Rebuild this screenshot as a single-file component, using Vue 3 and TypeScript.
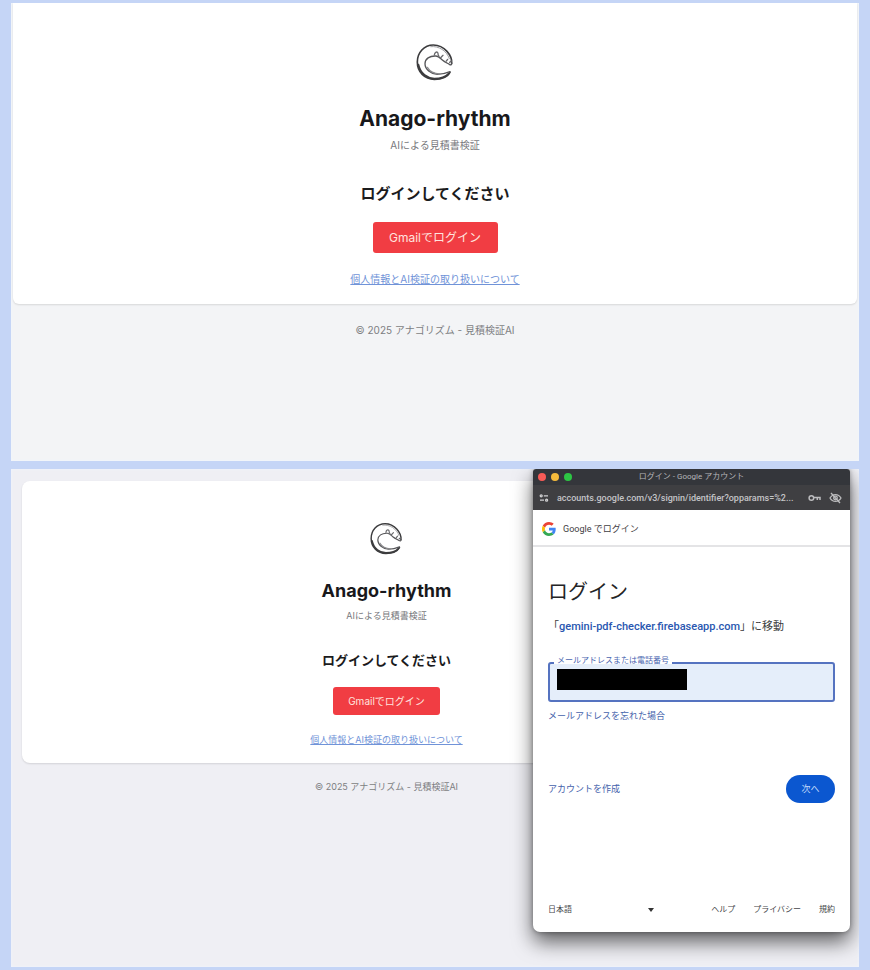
<script setup lang="ts">
interface Screen {
  id: string
  compact: boolean
  popup: boolean
}

const screens: Screen[] = [
  { id: 'login', compact: false, popup: false },
  { id: 'account', compact: true, popup: true },
]

const footerLinks: string[] = ['ヘルプ', 'プライバシー', '規約']
</script>

<template>
  <main class="board">
    <section v-for="s in screens" :key="s.id" class="screen" :class="{ compact: s.compact }">
      <div class="card">
        <svg class="logo" viewBox="48 24 114 112" fill="none" stroke-linecap="round" stroke-linejoin="round" aria-hidden="true">
          <path d="M155 84C157 62 134 29 100 29C72 29 52 52 52 80C52 110 74 132 103 132C126 132 143 124 150 111" stroke="#3c3c3e" stroke-width="5" />
          <path d="M55 88C61 116 82 129 103 130C122 130 138 124 147 114" stroke="#3c3c3e" stroke-width="6" />
          <path d="M150 109C138 114 126 117 112 117C92 115 75 102 75 85C75 70 89 61 108 62C117 63 121 69 128 75C134 80 141 83 148 87C153 90 156 88 155 83" stroke="#555558" stroke-width="4" />
          <path d="M82 96C89 108 103 115 119 116" stroke="#8a8a8d" stroke-width="4" />
          <path d="M103 59C104 51 110 48 113 52C116 56 112 59 117 63M122 67L129 60M139 77L143 72M149 81L154 77" stroke="#6a6a6d" stroke-width="4" />
          <path d="M92 34C116 31 140 46 148 70" stroke="#a0a0a3" stroke-width="3" />
        </svg>
        <h1>Anago-rhythm</h1>
        <p class="tagline">AIによる見積書検証</p>
        <h2>ログインしてください</h2>
        <button type="button" class="gmail">Gmailでログイン</button>
        <a href="#" class="policy">個人情報とAI検証の取り扱いについて</a>
      </div>
      <footer class="copyright">© 2025 アナゴリズム - 見積検証AI</footer>

      <div v-if="s.popup" class="popup">
        <div class="titlebar">
          <div class="lights"><i class="red"></i><i class="yellow"></i><i class="green"></i></div>
          <span class="window-title">ログイン - Google アカウント</span>
        </div>
        <div class="urlbar">
          <svg width="10" height="10" viewBox="0 0 10 10" fill="none" stroke="#d0d0d2" stroke-width="1.3" aria-hidden="true">
            <circle cx="2.2" cy="2.8" r="1" /><path d="M4.8 2.8H9M1 7.2H5" /><circle cx="7.6" cy="7.2" r="1" />
          </svg>
          <span class="url">accounts.google.com/v3/signin/identifier?opparams=%2...</span>
          <svg width="13" height="10" viewBox="0 0 13 10" fill="none" stroke="#bcbcbe" stroke-width="1.5" aria-hidden="true">
            <circle cx="3.4" cy="5" r="2.3" /><path d="M5.8 4.5H12V7M9.3 4.5V7" />
          </svg>
          <svg width="13" height="12" viewBox="0 0 13 12" fill="none" stroke="#bcbcbe" stroke-width="1.3" aria-hidden="true">
            <path d="M1 6C3.6 1.4 9.4 1.4 12 6C9.4 10.6 3.6 10.6 1 6Z" /><circle cx="6.5" cy="6" r="1.8" /><path d="M2 1L11 11" />
          </svg>
        </div>
        <div class="brand">
          <svg width="14" height="14" viewBox="0 0 48 48" aria-hidden="true">
            <path fill="#EA4335" d="M24 9.5c3.54 0 6.71 1.22 9.21 3.6l6.85-6.85C35.9 2.38 30.47 0 24 0 14.62 0 6.51 5.38 2.56 13.22l7.98 6.19C12.43 13.72 17.74 9.5 24 9.5z" />
            <path fill="#4285F4" d="M46.98 24.55c0-1.57-.15-3.09-.38-4.55H24v9.02h12.94c-.58 2.96-2.26 5.48-4.78 7.18l7.73 6c4.51-4.18 7.09-10.36 7.09-17.65z" />
            <path fill="#FBBC05" d="M10.53 28.59c-.48-1.45-.76-2.99-.76-4.59s.27-3.14.76-4.59l-7.98-6.19C.92 16.46 0 20.12 0 24c0 3.88.92 7.54 2.56 10.78l7.97-6.19z" />
            <path fill="#34A853" d="M24 48c6.48 0 11.93-2.13 15.89-5.81l-7.73-6c-2.15 1.45-4.92 2.3-8.16 2.3-6.26 0-11.57-4.22-13.47-9.91l-7.98 6.19C6.51 42.62 14.62 48 24 48z" />
          </svg>
          <span>Google でログイン</span>
        </div>
        <form class="signin" @submit.prevent>
          <h3>ログイン</h3>
          <p class="target">「<a href="#">gemini-pdf-checker.firebaseapp.com</a>」に移動</p>
          <div class="field">
            <label for="identifier">メールアドレスまたは電話番号</label>
            <input id="identifier" type="text" autocomplete="off" />
            <span class="redacted"></span>
          </div>
          <a href="#" class="forgot">メールアドレスを忘れた場合</a>
          <div class="actions">
            <a href="#">アカウントを作成</a>
            <button type="submit">次へ</button>
          </div>
        </form>
        <div class="popup-footer">
          <div class="language">
            <select aria-label="日本語"><option>日本語</option></select>
            <svg width="6" height="4" viewBox="0 0 6 4" aria-hidden="true"><path d="M0 0H6L3 4Z" fill="#333" /></svg>
          </div>
          <nav><a v-for="l in footerLinks" :key="l" href="#">{{ l }}</a></nav>
        </div>
      </div>
    </section>
  </main>
</template>

<style>
body {
  background: #c5d5f6;
}
</style>

<style scoped>
* {
  box-sizing: border-box;
  margin: 0;
}
.board {
  display: flex;
  flex-direction: column;
  gap: 8px;
  padding: 3px 11px;
  font-family: Inter, "Noto Sans CJK JP", sans-serif;
}
.screen {
  position: relative;
  overflow: hidden;
  min-height: 458px;
  background: #f3f4f6;
  box-shadow: inset 0 0 3px #f0f5ff;
}
.card {
  display: flex;
  flex-direction: column;
  align-items: center;
  margin: 0 2px;
  padding: 40px 16px 17px;
  background: #fff;
  border-radius: 0 0 6px 6px;
  box-shadow: 0 1px 2px rgba(0, 0, 0, 0.12);
}
.logo {
  width: 38px;
  height: 38px;
}
h1 {
  margin-top: 22px;
  font-size: 21px;
  line-height: 32px;
  font-weight: 700;
  color: #18181b;
}
.tagline {
  margin-top: 2px;
  font-size: 10px;
  line-height: 16px;
  color: #77787c;
}
h2 {
  margin-top: 29px;
  font-size: 15px;
  line-height: 24px;
  font-weight: 700;
  color: #1b1b1d;
}
.gmail {
  width: 125px;
  height: 31px;
  margin-top: 16px;
  padding: 0;
  border: 0;
  border-radius: 3px;
  background: #f13d43;
  color: #ffe3df;
  font: 400 12px/16px Inter, "Noto Sans CJK JP", sans-serif;
}
.policy {
  margin-top: 18px;
  font-size: 10px;
  line-height: 16px;
  color: #7093d8;
}
.copyright {
  margin-top: 18px;
  text-align: center;
  font-size: 10px;
  line-height: 16px;
  color: #7d7e82;
}

.compact {
  min-height: 498px;
  background: #efeff4;
}
.compact .card {
  margin: 12px 108px 0 11px;
  padding: 41px 16px 16px;
  border-radius: 8px;
}
.compact .logo {
  width: 33px;
  height: 33px;
}
.compact h1 {
  margin-top: 23px;
  font-size: 18px;
  line-height: 26px;
}
.compact .tagline {
  margin-top: 5px;
  font-size: 9px;
  line-height: 14px;
}
.compact h2 {
  margin-top: 27px;
  font-size: 13px;
  line-height: 20px;
}
.compact .gmail {
  width: 107px;
  height: 28px;
  margin-top: 17px;
  font-size: 10px;
}
.compact .policy {
  font-size: 9px;
  line-height: 14px;
}
.compact .copyright {
  margin: 17px 108px 0 11px;
  font-size: 9px;
  line-height: 14px;
}

.popup {
  position: absolute;
  top: 0;
  right: 9px;
  width: 317px;
  height: 463px;
  display: flex;
  flex-direction: column;
  background: #fff;
  border-radius: 3px 3px 7px 7px;
  box-shadow: 0 10px 20px rgba(0, 0, 0, 0.6), 0 0 5px rgba(0, 0, 0, 0.35);
  font-family: Roboto, "Noto Sans CJK JP", sans-serif;
}
.popup a {
  text-decoration: none;
}
.titlebar {
  display: grid;
  grid-template-columns: 40px 1fr 40px;
  align-items: center;
  height: 16px;
  background: #34363b;
  border-radius: 3px 3px 0 0;
}
.lights {
  display: flex;
  gap: 5px;
  padding-left: 5px;
}
.lights i {
  flex: none;
  width: 8px;
  height: 8px;
  border-radius: 50%;
}
.red {
  background: #f85b57;
}
.yellow {
  background: #f5bb3c;
}
.green {
  background: #2dc644;
}
.window-title {
  text-align: center;
  font-size: 8px;
  line-height: 14px;
  color: #b4b5b9;
}
.urlbar {
  display: flex;
  align-items: center;
  gap: 8px;
  height: 25px;
  padding: 0 8px 0 6px;
  background: #3f3f42;
}
.urlbar svg {
  flex: none;
}
.url {
  flex: 1;
  white-space: nowrap;
  font-size: 9px;
  line-height: 16px;
  font-weight: 500;
  color: #c4c4c7;
}
.brand {
  display: flex;
  align-items: center;
  gap: 7px;
  height: 37px;
  padding: 2px 9px 0;
  border-bottom: 2px solid #e4e4e6;
  font-size: 9px;
  line-height: 16px;
  color: #3f4043;
}
.signin {
  display: flex;
  flex-direction: column;
  padding: 29px 15px 0;
}
h3 {
  font-size: 20px;
  line-height: 32px;
  font-weight: 400;
  color: #242426;
}
.target {
  margin-top: 10px;
  font-size: 11px;
  line-height: 18px;
  color: #3c3d40;
}
.target a {
  font-weight: 500;
  color: #2a57b0;
}
.field {
  position: relative;
  margin-top: 26px;
}
.field input {
  display: block;
  width: 100%;
  height: 40px;
  padding: 0 8px;
  border: 2px solid #5573c0;
  border-radius: 3px;
  background: #e5eefa;
  font-size: 11px;
}
.field label {
  position: absolute;
  top: -7px;
  left: 6px;
  padding: 0 3px;
  background: linear-gradient(#fff 9px, #e5eefa 9px);
  font-size: 8px;
  line-height: 12px;
  color: #4a65b0;
}
.redacted {
  position: absolute;
  top: 7px;
  left: 9px;
  width: 130px;
  height: 21px;
  background: #000;
}
.forgot {
  margin-top: 7px;
  font-size: 9px;
  line-height: 14px;
  color: #4562ab;
}
.actions {
  display: flex;
  align-items: center;
  justify-content: space-between;
  margin-top: 52px;
  font-size: 9px;
  line-height: 14px;
}
.actions a {
  color: #4562ab;
}
.actions button {
  width: 49px;
  height: 28px;
  padding: 0;
  border: 0;
  border-radius: 14px;
  background: #0b57d0;
  color: #c2dcfb;
  font: 400 9px/14px Roboto, "Noto Sans CJK JP", sans-serif;
}
.popup-footer {
  display: flex;
  align-items: center;
  justify-content: space-between;
  margin-top: auto;
  padding: 0 15px 15px;
  font-size: 8px;
  line-height: 14px;
}
.language {
  display: flex;
  align-items: center;
  width: 106px;
}
.language select {
  flex: 1;
  min-width: 0;
  height: 14px;
  padding: 0;
  border: 0;
  appearance: none;
  background: transparent;
  color: #444549;
  font: 400 8px/14px Roboto, "Noto Sans CJK JP", sans-serif;
}
nav {
  display: flex;
  gap: 18px;
}
nav a {
  color: #444549;
}
</style>
